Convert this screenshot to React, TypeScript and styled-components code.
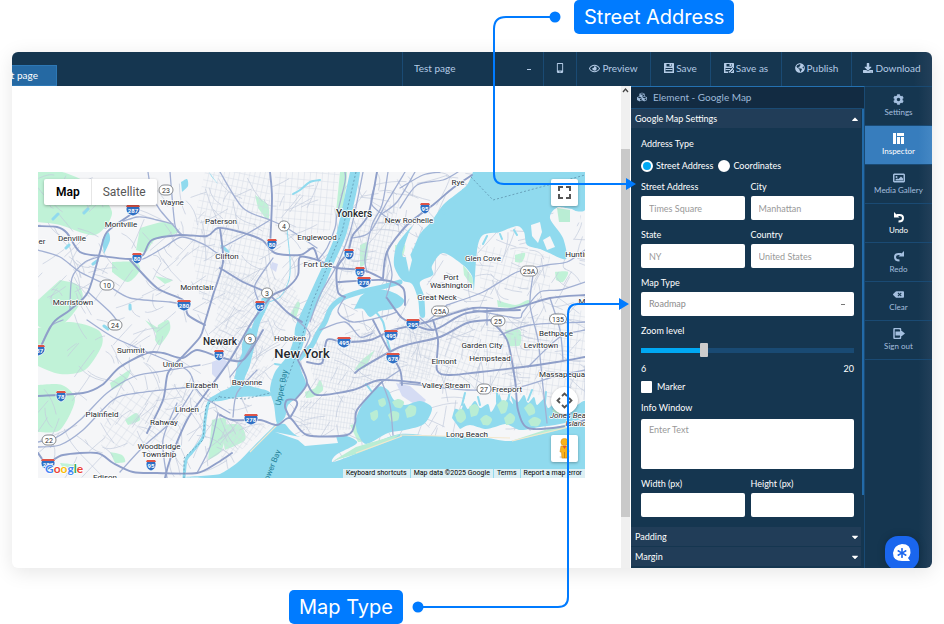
import React from "react";
import styled, { createGlobalStyle, css } from "styled-components";
import {
  FaCog,
  FaRegEye,
  FaMobileAlt,
  FaDownload,
  FaGlobeAmericas,
  FaCubes,
  FaBackspace,
  FaCaretUp,
  FaCaretDown,
  FaAsterisk,
} from "react-icons/fa";

/* ---------- theme ---------- */

const navy = "#153650";
const line = "#1a4a73";
const accent = "#007bff";
const uiFont = `Lato, "Open Sans", sans-serif`;
const mapFont = `Roboto, "Liberation Sans", sans-serif`;

const GlobalStyle = createGlobalStyle`
  * { box-sizing: border-box; }
  body { margin: 0; background: #fff; font-family: ${uiFont}; }
  button, input, select, textarea { font: inherit; margin: 0; }
`;

/* ---------- page frame ---------- */

const Stage = styled.main`
  position: relative;
  display: flex;
  min-height: 100vh;
  padding: 52px 12px 56px;
  overflow: hidden;
`;

const Editor = styled.div`
  flex: 1;
  min-width: 0;
  display: flex;
  flex-direction: column;
  overflow: hidden;
  border-radius: 6px;
  background: #fff;
  box-shadow: 0 4px 20px rgba(0, 0, 0, 0.1);
`;

const TopBar = styled.header`
  display: flex;
  align-items: flex-end;
  height: 34px;
  background: linear-gradient(to right, ${navy} 98%, #223f59);
  color: #b4cbe6;
  font-size: 10px;
`;

const PageTab = styled.button`
  width: 45px;
  height: 21px;
  padding: 0 18px 2px 0;
  display: flex;
  align-items: center;
  justify-content: flex-end;
  overflow: hidden;
  white-space: nowrap;
  border: 1px solid #2d78b5;
  border-left: 0;
  background: #2569a3;
  color: #fff;
`;

const Toolbar = styled.nav`
  display: flex;
  align-self: stretch;
  margin-left: auto;
`;

const PagePicker = styled.select`
  width: 141px;
  padding: 0 11px 2px;
  border: 0;
  border-left: 1px solid ${line};
  appearance: none;
  background: linear-gradient(#b4cbe6, #b4cbe6) no-repeat right 12px center / 4px 1px;
  color: inherit;
`;

const ToolButton = styled.button<{ $width: number }>`
  width: ${(p) => p.$width}px;
  display: flex;
  align-items: center;
  justify-content: center;
  gap: 2px;
  padding: 0 0 2px;
  border: 0;
  border-left: 1px solid ${line};
  background: none;
  color: inherit;
  white-space: nowrap;
`;

const Workspace = styled.div`
  flex: 1;
  display: flex;
  min-height: 0;
`;

const Canvas = styled.section`
  flex: 1;
  min-width: 0;
  padding: 86px 36px 0 26px;
`;

const ScrollTrack = styled.div`
  width: 10px;
  display: flex;
  flex-direction: column;
  align-items: center;
  background: #f0f0f0;
  border-right: 1px solid #fff;
`;

const ScrollArrow = styled.svg`
  width: 7px;
  height: 7px;
  margin: 1px 0 55px;
`;

const ScrollThumb = styled.div`
  width: 100%;
  height: 368px;
  background: #c9c9c9;
`;

/* ---------- inspector ---------- */

const Inspector = styled.aside`
  width: 234px;
  display: flex;
  flex-direction: column;
  border-top: 1px solid #2471b1;
  border-right: 1px solid ${line};
  background: ${navy};
  color: #fff;
  font-size: 9px;
  line-height: 12px;
`;

const InspectorTitle = styled.h2`
  display: flex;
  align-items: center;
  gap: 6px;
  height: 21px;
  margin: 0;
  padding: 0 6px 2px;
  background: #122b42;
  color: #9db9d8;
  font-size: 10px;
  font-weight: 400;
`;

const InspectorScroll = styled.div`
  border-top: 1px solid ${line};
  background: linear-gradient(#226aa8, #226aa8) no-repeat right 0 top 0 / 2px 386px;
  padding-right: 3px;
`;

const SectionToggle = styled.button`
  width: 100%;
  height: 20px;
  display: flex;
  align-items: center;
  justify-content: space-between;
  padding: 0 1px 0 4px;
  border: 0;
  border-bottom: 1px solid ${navy};
  background: #213d58;
  color: #fff;
`;

const Form = styled.form`
  display: flex;
  flex-direction: column;
  gap: 9px;
  padding: 9px 7px 10px 10px;
`;

const Columns = styled.div`
  display: grid;
  grid-template-columns: 1fr 1fr;
  gap: 6px;
`;

const Field = styled.div<{ $gap?: number }>`
  display: flex;
  flex-direction: column;
  gap: ${(p) => p.$gap ?? 3}px;
  min-width: 0;
`;

const controlLook = css`
  width: 100%;
  min-width: 0;
  border: 0;
  border-radius: 2px;
  background-color: #fff;
  color: #8c8c8c;
  &::placeholder { color: #999; opacity: 1; }
`;

const TextInput = styled.input`
  ${controlLook}
  height: 24px;
  padding: 0 8px;
`;

const NoteArea = styled.textarea`
  ${controlLook}
  display: block;
  height: 50px;
  padding: 5px 8px;
  resize: none;
`;

const MapTypeSelect = styled.select`
  ${controlLook}
  height: 24px;
  padding: 0 8px;
  appearance: none;
  background-image: linear-gradient(#777, #777);
  background-repeat: no-repeat;
  background-size: 4px 1px;
  background-position: right 9px center;
`;

const AddressType = styled.fieldset`
  margin: 0;
  padding: 0;
  border: 0;
  min-width: 0;
`;

const Legend = styled.legend`
  padding: 0;
  margin: 1px 0 10px;
`;

const Choices = styled.div`
  display: flex;
  gap: 5px;
`;

const Choice = styled.label<{ $gap: number }>`
  display: flex;
  align-items: center;
  gap: ${(p) => p.$gap}px;
`;

const Radio = styled.input`
  appearance: none;
  width: 12px;
  height: 12px;
  border: 2px solid #fff;
  border-radius: 50%;
  background: #fff;
  &:checked { background: #00a8f3; }
`;

const Tick = styled.input`
  appearance: none;
  width: 11px;
  height: 12px;
  border-radius: 1px;
  background: #fff;
`;

const Range = styled.input`
  appearance: none;
  width: 100%;
  height: 14px;
  background: linear-gradient(to right, #00a8f3 29%, #194a73 29%) no-repeat center / 100% 5px;
  &::-webkit-slider-thumb {
    appearance: none;
    width: 8px;
    height: 14px;
    border-radius: 1px;
    background: #ccc;
  }
`;

const RangeEnds = styled.div`
  display: flex;
  justify-content: space-between;
`;

/* ---------- right rail ---------- */

const Rail = styled.nav`
  position: relative;
  width: 67px;
  border-top: 1px solid ${line};
  background: linear-gradient(to right, ${navy} 80%, #223f59);
`;

const RailButton = styled.button<{ $tone?: "bright" | "active" }>`
  width: 100%;
  height: 39px;
  display: flex;
  flex-direction: column;
  align-items: center;
  justify-content: center;
  gap: 1px;
  padding: 0;
  border: 0;
  border-bottom: 1px solid ${line};
  background: ${(p) => (p.$tone === "active" ? "linear-gradient(to right, #377dbd 80%, #4487c4)" : "none")};
  color: ${(p) => (p.$tone ? "#fff" : "#a4bfdf")};
  font-size: 8px;
  line-height: 12px;
  white-space: nowrap;
`;

const ChatButton = styled.button`
  position: absolute;
  right: 13px;
  bottom: -2px;
  width: 34px;
  height: 34px;
  padding: 0;
  border: 0;
  border-radius: 13px;
  background: #1a66ee;
  box-shadow: 0 0 8px rgba(0, 0, 0, 0.2);
  display: grid;
  place-items: center;
`;

/* ---------- map ---------- */

const MapFrame = styled.div`
  position: relative;
  overflow: hidden;
  font-family: ${mapFont};
  color: #111;
`;

const MapArt = styled.svg`
  display: block;
  width: 100%;
  height: auto;
`;

const TypeSwitch = styled.div`
  position: absolute;
  left: 6px;
  top: 7px;
  display: flex;
  height: 26px;
  background: #fff;
  border-radius: 2px;
  box-shadow: 0 1px 3px rgba(0, 0, 0, 0.3);
`;

const TypeButton = styled.button<{ $on?: boolean }>`
  padding: 0 11px;
  border: 0;
  border-left: 1px solid ${(p) => (p.$on ? "transparent" : "#e6e6e6")};
  background: none;
  color: ${(p) => (p.$on ? "#000" : "#565656")};
  font-weight: ${(p) => (p.$on ? 600 : 400)};
  font-size: 12px;
`;

const MapControls = styled.div`
  position: absolute;
  top: 7px;
  right: 7px;
  bottom: 16px;
  display: flex;
  flex-direction: column;
  gap: 21px;
`;

const MapControl = styled.button<{ $round?: boolean }>`
  width: 27px;
  height: 27px;
  padding: 0;
  display: grid;
  place-items: center;
  border: 0;
  border-radius: ${(p) => (p.$round ? "50%" : "2px")};
  background: #fff;
  box-shadow: 0 1px 3px rgba(0, 0, 0, 0.3);
  margin-top: ${(p) => (p.$round ? "auto" : "0")};
`;

const MapCredits = styled.div`
  position: absolute;
  right: 0;
  bottom: 0;
  display: flex;
  gap: 1px;
  font-size: 7px;
  line-height: 9px;
  white-space: nowrap;
`;

const Credit = styled.a`
  padding: 0 3px;
  background: rgba(245, 245, 245, 0.75);
  color: #000;
  text-decoration: none;
`;

/* ---------- callouts ---------- */

const Wires = styled.svg`
  position: absolute;
  left: 0;
  top: 0;
  pointer-events: none;
`;

const Callout = styled.div<{ $left: number; $edge: "top" | "bottom" }>`
  position: absolute;
  left: ${(p) => p.$left}px;
  ${(p) => p.$edge}: 0;
  padding: 0 10px;
  border-radius: 5px;
  background: ${accent};
  color: #fff;
  font-family: Inter, sans-serif;
  font-size: 20px;
  line-height: 34px;
  white-space: nowrap;
`;

/* ---------- map data ---------- */

type Pt = [number, number];

const toPoints = (s: string): Pt[] => s.split(" ").map((p) => p.split(",").map(Number) as Pt);

/* Catmull-Rom spline through the listed points */
const curve = (s: string): string => {
  const p = toPoints(s);
  let d = `M${p[0][0]} ${p[0][1]}`;
  for (let i = 0; i < p.length - 1; i++) {
    const a = p[Math.max(0, i - 1)];
    const b = p[i];
    const c = p[i + 1];
    const e = p[Math.min(p.length - 1, i + 2)];
    d += `C${b[0] + (c[0] - a[0]) / 7} ${b[1] + (c[1] - a[1]) / 7} ${c[0] - (e[0] - b[0]) / 7} ${c[1] - (e[1] - b[1]) / 7} ${c[0]} ${c[1]}`;
  }
  return d;
};

const majorRoads = [
  "38,226 57,227 67,233 80,252 102,256 130,259 143,255 152,240 180,235 207,236 218,228 240,232 262,240 275,253 300,255 313,248 318,260",
  "130,215 107,232 100,252 88,292 70,310 53,323 38,353",
  "130,260 157,288 183,300 188,315 205,325",
  "220,228 223,262 213,295 205,322 200,337 182,357 168,373 163,400 147,433",
  "270,172 272,198 270,248",
  "318,260 300,257 298,275 287,288 273,295 262,308 250,325 230,360 203,397 187,420 170,460 165,478",
  "220,268 243,282 267,293 287,312 302,322",
  "318,260 337,268 363,270 383,279",
  "377,172 368,215 353,235 348,252 337,268 338,292 345,297",
  "338,282 383,280 403,288 405,305",
  "472,175 453,188 433,205 407,225 387,252 383,278",
  "38,396 83,393 102,385 120,367 147,353 163,353 182,358 197,350 220,357 243,360 263,330",
  "38,453 47,463 63,455 97,453 113,463 133,472 157,473 197,473 217,463 232,453",
  "220,415 233,420 260,420 277,425 290,418 307,435 347,435 355,423 357,410 377,387 382,382",
  "290,418 285,407 287,400 295,400 297,405 290,418",
  "295,400 307,383 298,360",
  "307,383 317,395 353,390 380,380 420,383",
  "307,362 322,363 327,340 343,342 370,340 393,330 427,322 473,308 510,309 550,298 585,295",
  "373,320 387,347 400,370 402,385",
  "387,298 397,312 405,320 433,330 467,313 520,310",
  "433,320 438,340 437,370 450,375 480,372 523,367 557,362 585,357",
  "490,320 507,340 515,380 518,410 528,428 560,427 585,420",
  "355,373 363,367 400,347 440,337 467,323 490,320",
];

const roads = [
  "38,250 60,257 80,272 107,285 130,298 170,302 183,305",
  "88,292 110,312 120,325",
  "102,256 85,262 72,278 70,310",
  "130,259 143,259 163,248 182,237 205,245 217,253 230,255",
  "170,172 175,225 182,235",
  "105,228 137,217 157,220 173,224",
  "148,172 152,195 160,210 182,235",
  "220,172 243,208 270,220 287,228 317,248",
  "270,220 245,235 221,248",
  "345,172 345,182 337,215 335,228 327,248 318,260",
  "363,172 357,202 350,232 337,265 320,295 310,322",
  "388,172 382,205 372,225 365,258 367,272",
  "405,172 387,202 370,232 353,238",
  "375,185 372,205 398,225",
  "400,188 423,175 440,172",
  "400,208 417,185 443,180 458,172",
  "415,172 397,202 380,215",
  "273,258 255,285 258,300",
  "387,252 392,275 386,298",
  "345,297 338,312 353,322 385,316 397,312",
  "447,305 483,292 517,272 547,265 567,262 585,250",
  "427,322 447,305",
  "533,275 530,305 538,340 543,387 547,423",
  "585,282 560,290 540,292 523,312 517,318 473,310",
  "487,308 487,325",
  "550,298 560,330 563,360",
  "63,320 50,327 38,353",
  "87,320 113,337 147,352 187,370 195,387 203,397",
  "38,442 57,437 80,420 107,393 133,377 157,372 200,365",
  "38,447 60,445 83,430 113,400 137,393 190,387",
  "193,390 173,420 143,447 120,472",
  "177,403 163,440 167,478",
  "197,473 210,447 218,413",
  "203,397 230,413",
  "257,337 243,360 230,377",
  "257,370 237,393 233,417",
  "400,383 420,385 467,390 515,388 553,377 585,370",
  "528,367 560,337 585,330",
  "320,330 345,322 360,337 373,333",
  "297,320 310,335 298,360",
  "400,370 382,382",
  "382,382 390,405 393,435",
  "420,318 433,330",
  "500,335 530,325 585,322",
];

const greens = [
  "38,172 62,172 90,185 112,212 95,235 60,225 38,222",
  "140,228 165,222 178,232 155,240 146,252 136,250",
  "112,262 135,262 140,270 128,282 112,272",
  "60,280 78,285 82,300 62,325 38,326 38,300",
  "38,328 70,322 98,330 102,345 85,370 60,374 38,366",
  "38,385 62,385 75,400 60,430 38,432",
  "158,325 168,320 170,330 160,345 155,340",
  "110,383 130,370 125,382 112,390",
  "125,420 136,413 140,420 128,425",
  "255,195 268,205 268,220 258,208",
  "340,172 347,172 342,215 336,212",
  "360,245 368,243 366,262 360,268",
  "395,245 405,245 402,258 395,262",
  "305,392 315,388 320,380 323,390 313,397 306,398",
  "375,350 362,360 355,370 365,368",
  "350,425 360,425 364,440 358,442",
  "220,425 240,425 245,440 225,450",
  "515,255 525,253 522,262 515,262",
  "497,300 515,305 528,300 530,305 515,308 498,307",
  "555,272 568,272 563,282 556,280",
  "505,330 520,330 520,345 508,346",
  "290,315 297,302 300,305 295,320",
  "463,265 472,277 472,285 464,275",
  "212,420 226,420 222,450 208,460",
  "145,320 160,330 160,338",
  "155,276 172,280 165,284",
  "110,452 122,455 125,462 115,463",
  "60,463 75,465 80,472 66,474",
];

const landPatches = [
  "550,218 558,207 572,209 580,214 581,222 563,226",
  "531,225 540,222 542,232 538,243 532,236",
  "543,240 550,236 555,247 547,250",
  "275,432 300,437 336,436 338,443 305,446 298,440",
  "408,247 412,260 409,272 406,258",
];

const marsh = [
  "378,400 384,398 386,404 382,407 379,405",
  "370,413 377,410 378,417 374,421 371,419",
  "388,415 393,411 399,413 398,420 391,422",
  "392,402 398,399 404,402 401,408 395,407",
  "405,410 410,405 416,407 415,415 407,418",
  "455,415 460,409 464,411 466,418 461,423 457,421",
  "469,407 475,404 479,408 477,415 471,417",
  "480,419 486,415 492,419 489,425 483,425",
  "497,405 503,400 508,403 506,412 501,414",
  "504,418 510,413 515,417 513,423 506,425",
  "524,408 530,403 534,407 535,413 529,416",
  "528,421 534,417 541,420 538,426 531,426",
  "552,411 559,405 567,405 568,411 559,416",
];

const water = [
  "350,172 360,172 347,232 333,265 320,298 308,325 303,345 299,357 301,370 306,385 296,398 288,405 285,417 277,423 274,405 270,390 275,372 288,355 294,338 296,325 308,298 323,265 337,232",
  "473,172 467,185 455,195 443,205 431,222 420,234 410,255 402,255 408,235 412,226 397,245 394,265 402,280 412,284 418,299 420,316 425,316 424,296 420,282 433,275 432,266 443,253 463,265 472,276 474,290 477,250 483,235 500,232 517,226 524,232 527,245 540,249 547,252 566,259 563,238 550,218 559,207 585,210 585,172",
  "277,423 253,447 237,463 220,474 205,478 585,478 585,424 545,431 511,441 480,437 435,436 400,434 370,445 355,454 333,462 336,455 357,443 347,436 336,436 300,437 285,424",
  "355,421 362,405 378,387 388,390 394,400 405,405 420,401 432,408 424,424 405,430 388,433 366,444 357,432",
  "452,418 455,409 461,410 464,403 468,409 475,401 480,408 488,404 491,412 496,404 499,394 503,403 508,399 513,404 511,396 518,402 524,395 528,403 534,397 537,405 544,399 548,408 554,404 560,408 568,400 576,405 585,401 585,417 560,424 540,427 520,430 506,424 495,427 485,429 470,425 460,429",
  "262,298 270,300 260,323 256,340 250,365 245,383 268,391 270,396 240,397 220,401 208,400 220,392 232,385 238,363 245,347",
  "360,297 372,289 392,292 404,300 398,308 380,311 370,317 363,309 354,309",
  "102,240 108,232 110,240 104,254",
  "181,182 187,179 188,186 182,192",
  "209,172 218,184 211,176",
];

const cityLabels: [number, number, string, ("mid" | "big" | "it")?][] = [
  [172, 205, "Wayne"],
  [121, 227, "Montville"],
  [72, 241, "Denville"],
  [42, 244, "er"],
  [221, 224, "Paterson"],
  [227, 259, "Clifton"],
  [197, 290, "Montclair"],
  [73, 305, "Morristown"],
  [354, 217, "Yonkers", "mid"],
  [409, 223, "New Rochelle"],
  [317, 240, "Englewood"],
  [318, 267, "Fort Lee"],
  [458, 185, "Rye"],
  [483, 261, "Glen Cove"],
  [451, 280, "Port"],
  [451, 288, "Washington"],
  [437, 300, "Great Neck"],
  [585, 257, "Huntington"],
  [592, 304, "Melville"],
  [131, 353, "Summit"],
  [173, 367, "Union"],
  [220, 345, "Newark", "mid"],
  [290, 341, "Hoboken"],
  [302, 358, "New York", "big"],
  [202, 388, "Elizabeth"],
  [247, 385, "Bayonne"],
  [187, 412, "Linden"],
  [102, 417, "Plainfield"],
  [164, 425, "Rahway"],
  [159, 449, "Woodbridge"],
  [159, 457, "Township"],
  [105, 480, "Edison"],
  [482, 348, "Garden City"],
  [490, 361, "Hempstead"],
  [444, 364, "Elmont"],
  [556, 336, "Bethpage"],
  [541, 348, "Levittown"],
  [562, 377, "Massapequa"],
  [446, 388, "Valley Stream"],
  [507, 392, "Freeport"],
  [467, 437, "Long Beach"],
  [572, 418, "Jones Beach", "it"],
  [576, 426, "Island", "it"],
];

const interstates: [number, number, string][] = [
  [133, 210, "287"],
  [137, 258, "80"],
  [184, 305, "280"],
  [272, 244, "80"],
  [260, 306, "95"],
  [349, 254, "87"],
  [360, 272, "95"],
  [364, 282, "278"],
  [425, 208, "95"],
  [413, 324, "295"],
  [344, 342, "495"],
  [391, 335, "495"],
  [393, 358, "678"],
  [219, 355, "78"],
  [61, 396, "78"],
  [38, 350, "287"],
  [251, 419, "278"],
  [151, 465, "95"],
  [48, 464, "287"],
];

const routes: [number, number, string][] = [
  [166, 190, "23"],
  [107, 285, "10"],
  [115, 325, "24"],
  [284, 226, "4"],
  [267, 293, "3"],
  [250, 339, "9"],
  [49, 440, "22"],
  [529, 271, "25A"],
  [440, 311, "25A"],
  [498, 321, "25"],
  [558, 319, "135"],
  [484, 389, "27"],
];

/* Local streets: short seeded strokes laid over the street grid */
const localStreets = (() => {
  let seed = 41;
  const rnd = () => {
    seed = (seed * 16807) % 2147483647;
    return seed / 2147483647;
  };
  const out: string[] = [];
  for (let i = 0; i < 620; i++) {
    const x = 38 + rnd() * 547;
    const y = 172 + rnd() * 290;
    const base = x < 340 ? 0.9 : 0.2;
    const angle = base + (rnd() > 0.5 ? 1.57 : 0) + (rnd() - 0.5) * 1.1;
    const len = 10 + rnd() * 24;
    const bend = (rnd() - 0.5) * 10;
    const dx = Math.cos(angle) * len;
    const dy = Math.sin(angle) * len;
    out.push(
      `M${x.toFixed(1)} ${y.toFixed(1)}q${(dx / 2 + bend).toFixed(1)} ${(dy / 2 - bend).toFixed(1)} ${dx.toFixed(1)} ${dy.toFixed(1)}`
    );
  }
  return out.join("");
})();

const gridPatches: [string, number, number][] = [
  ["205,172 270,172 270,250 240,300 200,300 190,240", 12, 5],
  ["275,172 340,172 330,230 290,240 275,225", 5, 6],
  ["225,270 290,280 300,300 255,370 210,350", 32, 4],
  ["310,300 335,275 345,290 318,335 300,345", 28, 3],
  ["305,345 375,330 395,380 350,395 315,385", 12, 3],
  ["300,400 350,395 370,390 350,430 300,430", 8, 3],
  ["400,320 480,315 480,380 410,382", 20, 5],
  ["345,225 400,200 385,270 345,275", 12, 4],
  ["480,325 585,310 585,395 490,395", 8, 6],
  ["240,375 268,365 262,385 242,400", 30, 3],
  ["110,395 200,380 180,440 100,450", 35, 7],
  ["395,325 435,320 430,378 385,380", 10, 4],
  ["225,420 270,425 245,447 220,465", 35, 4],
  ["480,245 550,255 550,290 480,290", 14, 7],
];

const labelStyle = {
  mid: { fontSize: 10, fontWeight: 500 },
  big: { fontSize: 13, fontWeight: 500 },
  it: { fontSize: 8, fontStyle: "italic" as const },
  none: { fontSize: 8 },
};

const Shield = ({ x, y, n }: { x: number; y: number; n: string }) => {
  const w = n.length > 2 ? 7 : 5;
  return (
    <g>
      <path
        d={`M${x - w + 1} ${y - 5}H${x + w - 1}L${x + w} ${y - 1}Q${x + w} ${y + 4} ${x} ${y + 6}Q${x - w} ${y + 4} ${x - w} ${y - 1}Z`}
        fill="#2e6fc4"
        stroke="#fff"
        strokeWidth="0.7"
      />
      <path d={`M${x - w + 1} ${y - 5}H${x + w - 1}L${x + w} ${y - 3}H${x - w}Z`} fill="#df5548" />
      <text x={x} y={y + 3} textAnchor="middle" fontSize="6" fontWeight="700" fill="#fff">
        {n}
      </text>
    </g>
  );
};

const Route = ({ x, y, n }: { x: number; y: number; n: string }) => {
  const w = 8 + n.length * 3;
  return (
    <g>
      <rect x={x - w / 2} y={y - 5} width={w} height="10" rx="5" fill="#fff" stroke="#6b6f74" strokeWidth="0.8" />
      <text x={x} y={y + 2.5} textAnchor="middle" fontSize="7" fill="#333">
        {n}
      </text>
    </g>
  );
};

const NewYorkMap = () => (
  <MapArt viewBox="38 172 547 306" role="img" aria-label="Map of New York">
    <defs>
      {gridPatches.map(([, angle, step], i) => (
        <pattern key={i} id={`grid${i}`} width={step} height={step + 2} patternUnits="userSpaceOnUse" patternTransform={`rotate(${angle})`}>
          <path d={`M0 0H${step}M0 0V${step + 2}`} stroke="#d3d9e5" strokeWidth="0.9" />
        </pattern>
      ))}
    </defs>
    <rect x="38" y="172" width="547" height="306" fill="#f5f6f8" />
    <g fill="#c0f2d7">
      {greens.map((g) => (
        <path key={g} d={curve(g) + "Z"} />
      ))}
    </g>
    {gridPatches.map(([shape], i) => (
      <polygon key={i} points={shape} fill={`url(#grid${i})`} />
    ))}
    <path d={localStreets} fill="none" stroke="#c3cbdd" strokeWidth="0.7" />
    <g fill="#d5dcf4">
      <polygon points="396,383 410,386 426,400 420,408 402,396" />
      <polygon points="212,362 222,358 228,362 218,380 212,374" />
      <polygon points="272,262 278,264 276,272 270,268" />
    </g>
    <g fill="#90daee">
      {water.map((w) => (
        <path key={w} d={curve(w) + "Z"} />
      ))}
    </g>
    <g fill="none" stroke="#90daee" strokeLinecap="round" strokeLinejoin="round">
      <path d={curve("300,358 312,345 318,333 325,322 331,308 343,298 360,292 378,288 400,282")} strokeWidth="5" />
      <path d={curve("220,395 209,402 205,420 203,437 192,452 186,460 184,478")} strokeWidth="3" />
      <path d={curve("376,312 383,322 386,335 390,350")} strokeWidth="2" />
      <path d={curve("293,194 300,190 310,182 320,180")} strokeWidth="2" />
      <path d={curve("287,230 290,260 289,280 280,297 265,303")} strokeWidth="1" />
      <path d={curve("250,330 244,345 246,370")} strokeWidth="4" />
      <path d="M292 357l-12 -4M288 366l-13 -2M497 402v-10M508 402l2 -12M528 400l4 -10M480 405l-2 -8M462 405l3 -12M372 392l-6 -8M545 402l1 -10" strokeWidth="2" />
      <path d="M52 196l4 -5M76 200l3 -5M84 213l4 -4M58 214l-5 5M93 264l4 -3M104 326l4 3M130 305v4M66 248l3 -3M222 246l6 6" strokeWidth="3" />
      <path d="M425 270l6 -6M487 236l-4 8M500 234l2 5M514 230l3 5M420 290l-4 -8M441 211l4 3M452 200l4 3M463 190l3 3M432 222l4 3" strokeWidth="2" />
    </g>
    <g fill="#f5f6f8">
      {landPatches.map((l) => (
        <polygon key={l} points={l} />
      ))}
    </g>
    <g fill="#b9edd4">
      <polygon points="557,208 570,210 570,222 559,222" />
      {marsh.map((m) => (
        <path key={m} d={curve(m) + "Z"} />
      ))}
      <path d="M333 461L356 447L400 434L392 440L356 454Z" />
      <path d="M511 441L548 429L585 420V423L548 433Z" />
    </g>
    <path d="M400 435L440 436L510 438M356 453L402 436M277 425L250 452M512 441L585 423" stroke="#f4e7ce" strokeWidth="1.2" fill="none" />
    <g fill="none" stroke="#a2b0d3" strokeWidth="1.3" strokeLinejoin="round" strokeLinecap="round">
      {roads.map((r) => (
        <path key={r} d={curve(r)} />
      ))}
    </g>
    <g fill="none" stroke="#8f9fc9" strokeWidth="1.9" strokeLinejoin="round" strokeLinecap="round">
      {majorRoads.map((r) => (
        <path key={r} d={curve(r)} />
      ))}
    </g>
    <g fill="none" stroke="#5f93ad" strokeWidth="0.8" strokeDasharray="2 2">
      <path d="M356 172L342 232L328 265L312 303L298 350L284 388" />
      <path d="M471 177L493 200L585 175" />
      <path d="M220 397L245 399L270 393M220 396L206 406L203 440L184 458V478" />
    </g>
    {routes.map(([x, y, n]) => (
      <Route key={`${x}-${y}`} x={x} y={y} n={n} />
    ))}
    {interstates.map(([x, y, n]) => (
      <Shield key={`${x}-${y}`} x={x} y={y} n={n} />
    ))}
    <g fill="#25292e" stroke="#fff" strokeWidth="1.6" strokeLinejoin="round" paintOrder="stroke" textAnchor="middle">
      {cityLabels.map(([x, y, name, kind]) => (
        <text key={name} x={x} y={y} {...labelStyle[kind ?? "none"]}>
          {name}
        </text>
      ))}
    </g>
    <g fill="#1f7f98" fontSize="8" textAnchor="middle">
      <text transform="translate(284 388) rotate(-79)">Upper Bay</text>
      <text transform="translate(274 468) rotate(-68)">Lower Bay</text>
    </g>
    <text x="45" y="473" fontFamily="Lato, sans-serif" fontSize="12" fontWeight="700" stroke="#fff" strokeWidth="1.5" paintOrder="stroke">
      <tspan fill="#4285f4">G</tspan>
      <tspan fill="#ea4335">o</tspan>
      <tspan fill="#fbbc04">o</tspan>
      <tspan fill="#4285f4">g</tspan>
      <tspan fill="#34a853">l</tspan>
      <tspan fill="#ea4335">e</tspan>
    </text>
  </MapArt>
);

/* ---------- small icons ---------- */

const SaveIcon = ({ edit = false }: { edit?: boolean }) => (
  <svg width="10" height="10" viewBox="0 0 20 20" aria-hidden="true">
    <path fill="currentColor" fillRule="evenodd" d="M1 0H19L20 1V20H0V1ZM5 2V7H15V2ZM3 10V17H17V10Z" />
    <path fill="currentColor" d="M11 2H14V6H11ZM3 12H17V14H3Z" />
    {edit && <path d="M9 17L17 9L20 12L12 20H9Z" fill="currentColor" stroke={navy} strokeWidth="1.5" />}
  </svg>
);

const InspectorIcon = () => (
  <svg width="11" height="11" viewBox="0 0 11 11" fill="currentColor" aria-hidden="true">
    <path d="M0 0H3V11H0ZM4 0H11V3H4ZM4 4H7V11H4ZM8 4H11V11H8Z" />
  </svg>
);

const TurnIcon = ({ forward = false }: { forward?: boolean }) => (
  <svg width="12" height="12" viewBox="0 0 24 24" fill="none" aria-hidden="true">
    <g transform={forward ? "matrix(-1 0 0 1 24 0)" : undefined}>
      <path d="M7 8H13Q20 8 20 14Q20 21 11 21" stroke="currentColor" strokeWidth="4" />
      <path d="M2 2V13H13Z" fill="currentColor" />
    </g>
  </svg>
);

const GalleryIcon = () => (
  <svg width="12" height="10" viewBox="0 0 24 20" aria-hidden="true">
    <path fill="currentColor" fillRule="evenodd" d="M2 1H22L24 3V17L22 19H2L0 17V3ZM3 4V16H21V4Z" />
    <circle cx="7" cy="8" r="2" fill="currentColor" />
    <path d="M5 15V13L8 11L11 12L16 7L20 11V15Z" fill="currentColor" />
  </svg>
);

const SignOutIcon = () => (
  <svg width="12" height="11" viewBox="0 0 24 22" aria-hidden="true">
    <path d="M15 4V3Q15 1 13 1H4Q2 1 2 3V19Q2 21 4 21H13Q15 21 15 19V18" fill="none" stroke="currentColor" strokeWidth="3" />
    <path d="M5 7H14V3L24 11L14 19V15H5Z" fill="currentColor" />
  </svg>
);

const FullscreenIcon = () => (
  <svg width="13" height="13" viewBox="0 0 13 13" fill="none" stroke="#555" strokeWidth="2" aria-hidden="true">
    <path d="M1 5V1H5M8 1H12V5M12 8V12H8M5 12H1V8" />
  </svg>
);

const PanIcon = () => (
  <svg width="17" height="17" viewBox="0 0 17 17" fill="none" stroke="#555" strokeWidth="1.8" aria-hidden="true">
    <path d="M6 4L8.500 1.500L11 4M6 13L8.500 15.500L11 13M4 6L1.500 8.500L4 11M13 6L15.500 8.500L13 11" />
  </svg>
);

const PegmanIcon = () => (
  <svg width="13" height="21" viewBox="0 0 13 21" aria-hidden="true">
    <ellipse cx="6.500" cy="19" rx="5" ry="1.500" fill="#ddd" />
    <path d="M3 8H10L11 14H9.500L9 20H4L3.500 14H2Z" fill="#fbb31c" stroke="#d8901a" strokeWidth="0.6" />
    <circle cx="6.500" cy="4" r="3.600" fill="#fbb31c" stroke="#d8901a" strokeWidth="0.6" />
    <path d="M4.500 8L6.500 11L8.500 8Z" fill="#e5592b" />
    <path d="M6.500 14V20" stroke="#c47d15" strokeWidth="0.8" />
  </svg>
);

/* ---------- page ---------- */

const LabeledInput = ({ id, label, hint }: { id: string; label: string; hint?: string }) => (
  <Field>
    <label htmlFor={id}>{label}</label>
    <TextInput id={id} placeholder={hint} />
  </Field>
);

const railItems: { name: string; icon: React.ReactNode; tone?: "bright" | "active" }[] = [
  { name: "Settings", icon: <FaCog size={11} /> },
  { name: "Inspector", icon: <InspectorIcon />, tone: "active" },
  { name: "Media Gallery", icon: <GalleryIcon /> },
  { name: "Undo", icon: <TurnIcon />, tone: "bright" },
  { name: "Redo", icon: <TurnIcon forward /> },
  { name: "Clear", icon: <FaBackspace size={11} /> },
  { name: "Sign out", icon: <SignOutIcon /> },
];

export default function App() {
  return (
    <Stage>
      <GlobalStyle />
      <Editor>
        <TopBar>
          <PageTab>Test page</PageTab>
          <Toolbar aria-label="Page tools">
            <PagePicker aria-label="Page" defaultValue="Test page">
              <option>Test page</option>
            </PagePicker>
            <ToolButton $width={33} aria-label="Mobile view">
              <FaMobileAlt size={10} />
            </ToolButton>
            <ToolButton $width={74}>
              <FaRegEye size={11} />
              Preview
            </ToolButton>
            <ToolButton $width={60}>
              <SaveIcon />
              Save
            </ToolButton>
            <ToolButton $width={71}>
              <SaveIcon edit />
              Save as
            </ToolButton>
            <ToolButton $width={70}>
              <FaGlobeAmericas size={10} />
              Publish
            </ToolButton>
            <ToolButton $width={81}>
              <FaDownload size={10} />
              Download
            </ToolButton>
          </Toolbar>
        </TopBar>

        <Workspace>
          <Canvas>
            <MapFrame>
              <NewYorkMap />
              <TypeSwitch>
                <TypeButton $on>Map</TypeButton>
                <TypeButton>Satellite</TypeButton>
              </TypeSwitch>
              <MapControls>
                <MapControl aria-label="Full screen">
                  <FullscreenIcon />
                </MapControl>
                <MapControl $round aria-label="Pan">
                  <PanIcon />
                </MapControl>
                <MapControl aria-label="Street view">
                  <PegmanIcon />
                </MapControl>
              </MapControls>
              <MapCredits>
                <Credit href="#shortcuts">Keyboard shortcuts</Credit>
                <Credit href="#data">Map data ©2025 Google</Credit>
                <Credit href="#terms">Terms</Credit>
                <Credit href="#report">Report a map error</Credit>
              </MapCredits>
            </MapFrame>
          </Canvas>
          <ScrollTrack>
            <ScrollArrow viewBox="0 0 7 7" fill="none" stroke="#444" strokeWidth="1.300">
              <path d="M1 5L3.500 2L6 5" />
            </ScrollArrow>
            <ScrollThumb />
          </ScrollTrack>

          <Inspector>
            <InspectorTitle>
              <FaCubes size={10} />
              Element - Google Map
            </InspectorTitle>
            <InspectorScroll>
              <SectionToggle>
                Google Map Settings
                <FaCaretUp size={10} />
              </SectionToggle>
              <Form>
                <AddressType>
                  <Legend>Address Type</Legend>
                  <Choices>
                    <Choice $gap={3}>
                      <Radio type="radio" name="address" defaultChecked />
                      Street Address
                    </Choice>
                    <Choice $gap={3}>
                      <Radio type="radio" name="address" />
                      Coordinates
                    </Choice>
                  </Choices>
                </AddressType>
                <Columns>
                  <LabeledInput id="street" label="Street Address" hint="Times Square" />
                  <LabeledInput id="city" label="City" hint="Manhattan" />
                </Columns>
                <Columns>
                  <LabeledInput id="state" label="State" hint="NY" />
                  <LabeledInput id="country" label="Country" hint="United States" />
                </Columns>
                <Field>
                  <label htmlFor="type">Map Type</label>
                  <MapTypeSelect id="type" defaultValue="Roadmap">
                    <option>Roadmap</option>
                  </MapTypeSelect>
                </Field>
                <Field $gap={6}>
                  <label htmlFor="zoom">Zoom level</label>
                  <Range id="zoom" type="range" min={6} max={20} defaultValue={10} />
                  <RangeEnds>
                    <span>6</span>
                    <span>20</span>
                  </RangeEnds>
                  <Choice $gap={5}>
                    <Tick type="checkbox" />
                    Marker
                  </Choice>
                </Field>
                <Field $gap={5}>
                  <label htmlFor="info">Info Window</label>
                  <NoteArea id="info" placeholder="Enter Text" />
                </Field>
                <Columns>
                  <LabeledInput id="width" label="Width (px)" />
                  <LabeledInput id="height" label="Height (px)" />
                </Columns>
              </Form>
              <SectionToggle>
                Padding
                <FaCaretDown size={10} />
              </SectionToggle>
              <SectionToggle>
                Margin
                <FaCaretDown size={10} />
              </SectionToggle>
            </InspectorScroll>
          </Inspector>

          <Rail aria-label="Editor sections">
            {railItems.map(({ name, icon, tone }) => (
              <RailButton key={name} $tone={tone}>
                {icon}
                {name}
              </RailButton>
            ))}
            <ChatButton aria-label="Help">
              <svg width="20" height="20" viewBox="0 0 20 20" aria-hidden="true">
                <path d="M10 1Q19 1 18.500 10Q18 13 16 15L18 18H10Q1 18 1 10Q2 2 10 1Z" fill="#fff" />
                <FaAsterisk x="5" y="5" size={10} color="#1a66ee" />
              </svg>
            </ChatButton>
          </Rail>
        </Workspace>
      </Editor>

      <Wires width="944" height="624" viewBox="0 0 944 624" aria-hidden="true">
        <g fill="none" stroke={accent} strokeWidth="2">
          <path d="M555 17H506Q494 17 494 29V174Q494 184 504 184H628" />
          <path d="M418 607H558Q568 607 568 597V314Q568 304 578 304H620" />
        </g>
        <g fill={accent}>
          <circle cx="555" cy="17" r="5.500" />
          <circle cx="418" cy="607" r="5.500" />
          <path d="M626 178L636 184L626 190ZM619 298L629 304L619 310Z" />
        </g>
      </Wires>
      <Callout $left={574} $edge="top">Street Address</Callout>
      <Callout $left={289} $edge="bottom">Map Type</Callout>
    </Stage>
  );
}
